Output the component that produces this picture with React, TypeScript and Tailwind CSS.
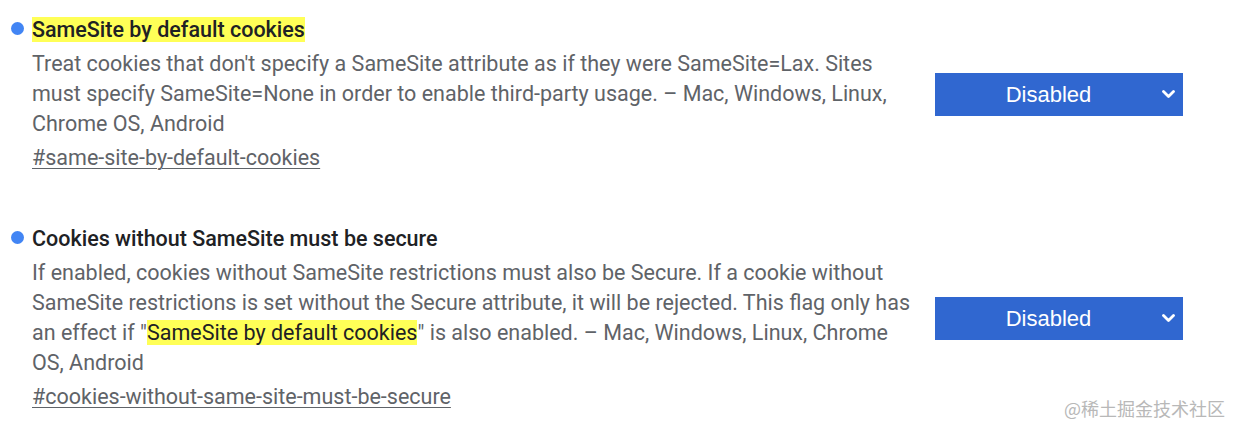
import React from "react";

const Chevron = () => (
  <svg width="13" height="9" viewBox="0 0 13 9" className="shrink-0 mr-[8px]">
    <polyline points="1.5,1.5 6.5,6.5 11.5,1.5" fill="none" stroke="#ffffff" strokeWidth="2.8" strokeLinecap="round" strokeLinejoin="round" />
  </svg>
);

const Select = () => (
  <div className="flex items-center w-[248px] h-[43px] bg-[#3067d0] text-white shrink-0">
    <span className="flex-1 text-center text-[22px] font-['Liberation_Sans',Arial,sans-serif]">Disabled</span>
    <Chevron />
  </div>
);

const Flag = ({
  title,
  highlightTitle,
  children,
  link,
}: {
  title: string;
  highlightTitle?: boolean;
  children: React.ReactNode;
  link: string;
}) => (
  <div className="flex items-center">
    <div className="flex">
      <div className="w-[22px] shrink-0 pt-[7px] pl-[1px]">
        <div className="w-[13px] h-[13px] rounded-full bg-[#4285f4]" />
      </div>
      <div className="w-[885px]">
        <div className="text-[21.5px] leading-[30px] font-medium text-[#202124]">
          {highlightTitle ? <span className="bg-[#ffff57]">{title}</span> : title}
        </div>
        <p className="mt-[4px] text-[21.5px] leading-[30px] text-[#5f6368]">{children}</p>
        <div className="mt-[4px] text-[21.5px] leading-[30px] text-[#5f6368]">
          <span className="underline underline-offset-[3px] decoration-[1px]">{link}</span>
        </div>
      </div>
    </div>
    <div className="ml-[18px]">
      <Select />
    </div>
  </div>
);

export default function App() {
  return (
    <div className="relative w-[1240px] h-[434px] bg-white overflow-hidden font-['Roboto','Noto_Sans',Arial,sans-serif]">
      <div className="pl-[10px] pt-[15px] flex flex-col gap-[51px]">
        <Flag title="SameSite by default cookies" highlightTitle link="#same-site-by-default-cookies">
          Treat cookies that don't specify a SameSite attribute as if they were SameSite=Lax. Sites must specify SameSite=None in order to enable third-party usage. – Mac, Windows, Linux, Chrome OS, Android
        </Flag>
        <Flag title="Cookies without SameSite must be secure" link="#cookies-without-same-site-must-be-secure">
          If enabled, cookies without SameSite restrictions must also be Secure. If a cookie without SameSite restrictions is set without the Secure attribute, it will be rejected. This flag only has an effect if "
          <span className="bg-[#ffff57] text-[#202124]">SameSite by default cookies</span>" is also enabled. – Mac, Windows, Linux, Chrome OS, Android
        </Flag>
      </div>
      <div className="absolute right-[15px] bottom-[15px] text-[18px] leading-[22px] text-[#b8b8b8] font-['Noto_Sans_CJK_SC','Noto_Sans',sans-serif]">
        @稀土掘金技术社区
      </div>
    </div>
  );
}
